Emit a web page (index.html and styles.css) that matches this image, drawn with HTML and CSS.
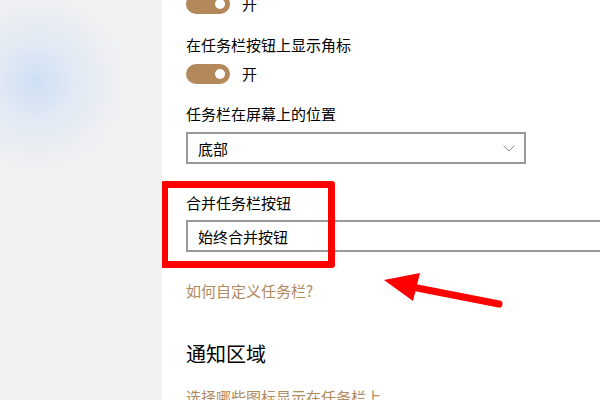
FILE: index.html
```html
<!DOCTYPE html>
<html lang="zh-CN">
<head>
<meta charset="utf-8">
<link rel="stylesheet" href="styles.css">
</head>
<body>
<div class="app">
  <aside class="sidebar"></aside>
  <main class="main">
    <div class="toggle-row first">
      <span class="toggle"><span class="knob"></span></span>
      <span class="toggle-text">开</span>
    </div>
    <div class="label">在任务栏按钮上显示角标</div>
    <div class="toggle-row">
      <span class="toggle"><span class="knob"></span></span>
      <span class="toggle-text">开</span>
    </div>
    <div class="label gap-l">任务栏在屏幕上的位置</div>
    <div class="select short">
      <span>底部</span>
      <svg class="chev" width="12" height="7" viewBox="0 0 12 7"><polyline points="0.5,0.5 6,6 11.5,0.5" fill="none" stroke="#8a8a8a" stroke-width="1"/></svg>
    </div>
    <div class="group">
      <div class="highlight"></div>
      <div class="label">合并任务栏按钮</div>
      <div class="select long"><span>始终合并按钮</span></div>
    </div>
    <a class="link first-link">如何自定义任务栏?</a>
    <h2 class="heading">通知区域</h2>
    <a class="link second-link">选择哪些图标显示在任务栏上</a>
  </main>
</div>
<svg class="arrow" width="600" height="400" viewBox="0 0 600 400">
  <line x1="499" y1="304" x2="412" y2="287" stroke="#ff0000" stroke-width="7" stroke-linecap="round"/>
  <polygon points="384,280 420,273 413,301" fill="#ff0000"/>
</svg>
</body>
</html>
```
FILE: styles.css
```css
html, body {
  margin: 0;
  padding: 0;
  width: 600px;
  height: 400px;
  overflow: hidden;
  background: #fff;
  font-family: "Noto Sans CJK SC", "Noto Sans", sans-serif;
  color: #000;
}
.app {
  display: flex;
  width: 600px;
  height: 400px;
  overflow: hidden;
  position: relative;
}
.sidebar {
  width: 162px;
  flex: 0 0 162px;
  background:
    radial-gradient(circle at 36px 82px, rgba(200,220,245,0.85) 0, rgba(212,226,245,0.55) 38px, rgba(242,242,242,0) 95px),
    #f2f2f2;
}
.main {
  flex: 1;
  padding-left: 24px;
  margin-top: -6px;
  overflow: hidden;
  display: flex;
  flex-direction: column;
  align-items: flex-start;
}
.main > * { flex-shrink: 0; }
.toggle-row {
  display: flex;
  align-items: center;
  height: 20px;
  margin-top: 9px;
}
.toggle-row.first { margin-top: 0; }
.toggle {
  width: 44px;
  height: 20px;
  border-radius: 10px;
  background: #b3895c;
  display: flex;
  align-items: center;
  justify-content: flex-end;
  padding-right: 5px;
  box-sizing: border-box;
}
.knob {
  width: 10px;
  height: 10px;
  border-radius: 50%;
  background: #fff;
}
.toggle-text {
  font-size: 15px;
  line-height: 20px;
  margin-left: 12px;
}
.label {
  font-size: 15px;
  line-height: 20px;
  margin-top: 21px;
}
.label.gap-l { margin-top: 20px; }
.select {
  box-sizing: border-box;
  height: 32px;
  border: 2px solid #999;
  display: flex;
  align-items: center;
  justify-content: space-between;
  padding: 0 9px 0 10px;
  font-size: 15px;
  margin-top: 8px;
  flex-shrink: 0;
}
.select.short { width: 340px; }
.select.long { width: 440px; margin-top: 7px; }
.chev { display: block; margin-top: 1px; }
.group {
  position: relative;
  margin-top: 29px;
}
.group .label { margin-top: 0; }
.highlight {
  position: absolute;
  left: -25px;
  top: -12px;
  width: 174px;
  height: 87px;
  box-sizing: border-box;
  border: 7px solid #ff0000;
  border-radius: 3px;
  z-index: 2;
}
.link {
  font-size: 15px;
  line-height: 20px;
  color: #b08a60;
  text-decoration: none;
}
.first-link { margin-top: 29px; }
.heading {
  font-size: 20px;
  line-height: 28px;
  font-weight: normal;
  margin: 39px 0 0 0;
}
.second-link { margin-top: 19px; }
.arrow {
  position: absolute;
  left: 0;
  top: 0;
  pointer-events: none;
}
```
